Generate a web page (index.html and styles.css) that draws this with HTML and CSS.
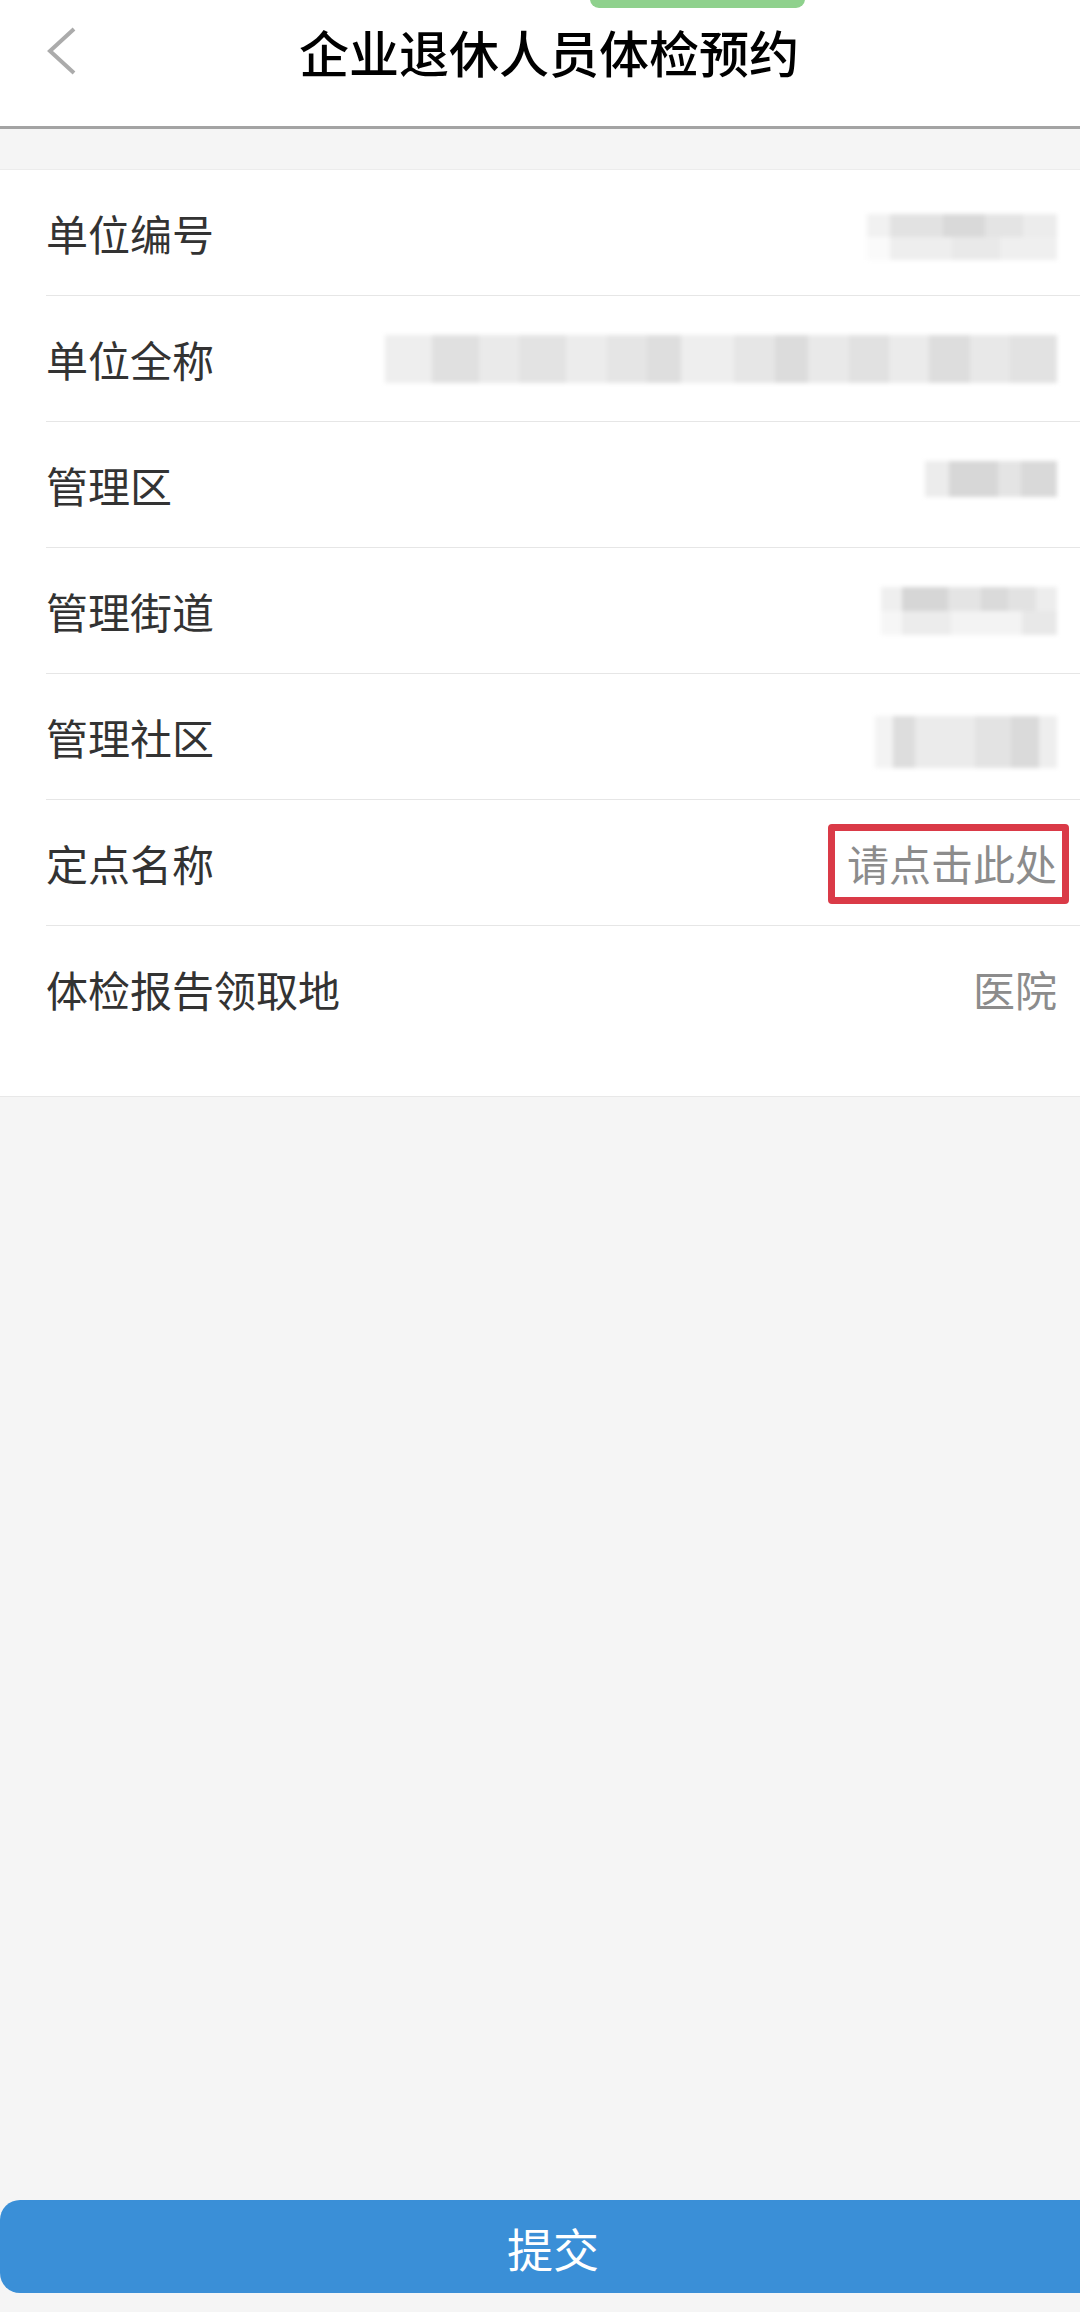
FILE: index.html
```html
<!DOCTYPE html>
<html lang="zh-CN">
<head>
    <meta charset="UTF-8">
    <meta name="viewport" content="width=device-width, initial-scale=1.0">
    <title>企业退休人员体检预约</title>
    <link rel="stylesheet" href="styles.css">
</head>
<body>
    <div class="page">
        <header class="header">
            <div class="pill"></div>
            <div class="navbar">
                <button class="back" aria-label="返回">
                    <svg width="32" height="50" viewBox="0 0 32 50">
                        <polyline points="28,3 4,25 28,47" fill="none" stroke="#ababab" stroke-width="4" stroke-linejoin="miter"/>
                    </svg>
                </button>
                <h1 class="title">企业退休人员体检预约</h1>
                <div class="spacer"></div>
            </div>
        </header>

        <section class="card">
            <div class="row">
                <span class="label">单位编号</span>
                <span class="mosaic mosaic-code"></span>
            </div>
            <div class="row">
                <span class="label">单位全称</span>
                <span class="mosaic mosaic-name"></span>
            </div>
            <div class="row">
                <span class="label">管理区</span>
                <span class="mosaic mosaic-area"></span>
            </div>
            <div class="row">
                <span class="label">管理街道</span>
                <span class="mosaic mosaic-street"></span>
            </div>
            <div class="row">
                <span class="label">管理社区</span>
                <span class="mosaic mosaic-community"></span>
            </div>
            <div class="row">
                <span class="label">定点名称</span>
                <span class="value marked">请点击此处<span class="highlight"></span></span>
            </div>
            <div class="row last">
                <span class="label">体检报告领取地</span>
                <span class="value">医院</span>
            </div>
        </section>

        <div class="fill"></div>

        <button class="submit">提交</button>
    </div>
</body>
</html>
```

FILE: styles.css
```css
body {
    margin: 0;
    font-family: "Noto Sans CJK SC", "Noto Sans", sans-serif;
    background-color: #f5f5f5;
    overflow: hidden;
}

.page {
    display: flex;
    flex-direction: column;
    height: 2312px;
    overflow: hidden;
}

.header {
    position: relative;
    background-color: #fff;
    height: 126px;
    border-bottom: 3px solid #a3a3a3;
}

.pill {
    position: absolute;
    top: -10px;
    left: 590px;
    width: 215px;
    height: 18px;
    border-radius: 10px;
    background-color: #8fd18d;
}

.navbar {
    display: grid;
    grid-template-columns: 1fr auto 1fr;
    align-items: center;
    height: 102px;
}

.back {
    justify-self: start;
    margin-left: 46px;
    padding: 0;
    border: none;
    background: none;
    display: flex;
}

.title {
    margin: 0;
    padding-left: 18px;
    font-size: 50px;
    font-weight: 500;
    color: #000;
    line-height: 1;
}

.card {
    margin-top: 40px;
    background-color: #fff;
    border-top: 1px solid #ececec;
    border-bottom: 1px solid #e8e8e8;
    padding-bottom: 45px;
}

.row {
    display: flex;
    align-items: center;
    justify-content: space-between;
    height: 125px;
    margin-left: 46px;
    padding-right: 23px;
    border-bottom: 1px solid #e6e6e6;
}

.row.last {
    border-bottom: none;
}

.label {
    font-size: 42px;
    color: #333;
}

.value {
    font-size: 42px;
    color: #8c8c8c;
}

.marked {
    position: relative;
}

.highlight {
    position: absolute;
    top: -8px;
    right: -12px;
    bottom: -11px;
    left: -19px;
    border: 7px solid #da3a47;
    border-radius: 4px;
}

.mosaic {
    display: block;
    filter: blur(2px);
}

.mosaic-code {
    width: 190px;
    height: 46px;
    margin-top: 8px;
    background:
        linear-gradient(90deg, #f1f1f1 0 12%, #e2e2e2 12% 40%, #d9d9d9 40% 62%, #e4e4e4 62% 82%, #ececec 82%) top / 100% 50% no-repeat,
        linear-gradient(90deg, #fafafa 0 12%, #eeeeee 12% 45%, #e9e9e9 45% 70%, #efefef 70%) bottom / 100% 50% no-repeat;
}

.mosaic-name {
    width: 672px;
    height: 48px;
    background: linear-gradient(90deg,
        #eeeeee 0 7%, #e0e0e0 7% 14%, #eaeaea 14% 20%, #e3e3e3 20% 27%, #ececec 27% 33%,
        #e5e5e5 33% 39%, #dedede 39% 44%, #eeeeee 44% 52%, #e6e6e6 52% 58%, #dcdcdc 58% 63%,
        #e9e9e9 63% 69%, #e1e1e1 69% 75%, #ebebeb 75% 81%, #dddddd 81% 87%, #e8e8e8 87% 93%, #e2e2e2 93%);
}

.mosaic-area {
    width: 132px;
    height: 36px;
    margin-top: -12px;
    background: linear-gradient(90deg, #ececec 0 18%, #d7d7d7 18% 55%, #e4e4e4 55% 73%, #d9d9d9 73%);
}

.mosaic-street {
    width: 176px;
    height: 48px;
    background:
        linear-gradient(90deg, #efefef 0 12%, #d6d6d6 12% 38%, #e4e4e4 38% 57%, #dadada 57% 72%, #e2e2e2 72% 88%, #ededed 88%) top / 100% 50% no-repeat,
        linear-gradient(90deg, #f6f6f6 0 12%, #ececec 12% 40%, #f3f3f3 40% 80%, #e8e8e8 80%) bottom / 100% 50% no-repeat;
}

.mosaic-community {
    width: 182px;
    height: 52px;
    margin-top: 10px;
    background: linear-gradient(90deg, #f3f3f3 0 10%, #dddddd 10% 22%, #ebebeb 22% 55%, #e3e3e3 55% 75%, #dadada 75% 90%, #eeeeee 90%);
}

.fill {
    flex: 1;
}

.submit {
    width: 1106px;
    height: 93px;
    margin-bottom: 19px;
    padding: 0;
    border: none;
    border-radius: 20px;
    background-color: #3a8fd7;
    color: #fff;
    font-family: "Noto Sans CJK SC", "Noto Sans", sans-serif;
    font-size: 46px;
    flex-shrink: 0;
}
```
